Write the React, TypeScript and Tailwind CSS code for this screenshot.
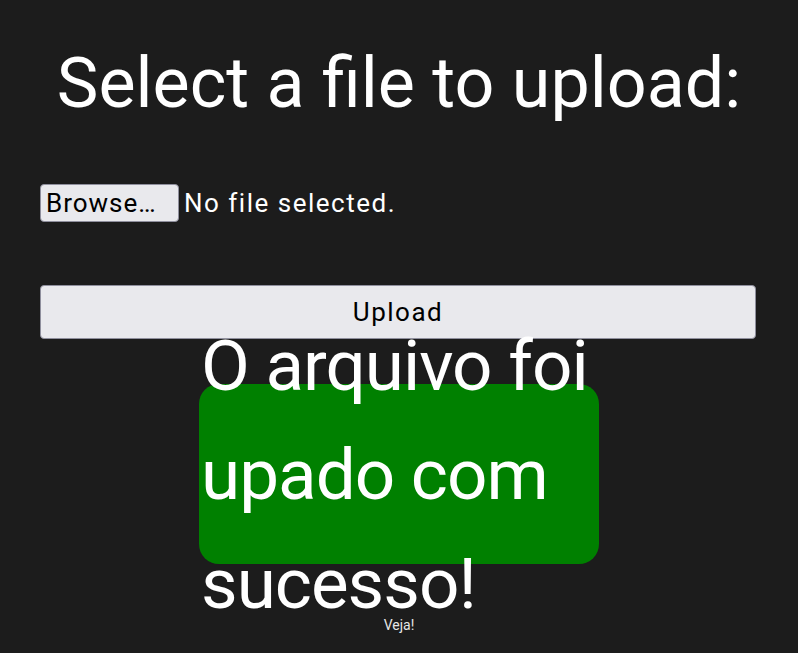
import React from 'react'

const App = () => {
  return (
    <div
      className="min-h-[653px] w-full bg-[#1c1c1c] text-white overflow-hidden"
      style={{ fontFamily: 'Roboto, "Noto Sans", sans-serif' }}
    >
      <h1 className="pt-[38px] text-center text-[70px] leading-[90px]">
        Select a file to upload:
      </h1>
      <form className="px-[40px] pt-[56px]">
        <div className="flex items-center gap-[5px] h-[38px]">
          <button
            type="button"
            className="h-[38px] w-[139px] px-[5px] text-left bg-[#e9e9ed] text-black border border-[#8f8f9d] rounded-[4px] text-[26px] leading-none tracking-[1px]"
          >
            Browse…
          </button>
          <span className="text-[26px] tracking-[1.5px]">No file selected.</span>
        </div>
        <button
          type="submit"
          className="mt-[63px] w-[716px] h-[54px] bg-[#e9e9ed] text-black border border-[#8f8f9d] rounded-[4px] text-[26px] tracking-[1.5px]"
        >
          Upload
        </button>
      </form>
      <div className="mx-auto mt-[45px] w-[400px] h-[180px] rounded-[20px] bg-[#008000] flex items-center">
        <p className="text-[71px] leading-[109px] pl-[2px] tracking-[-1px]">O arquivo foi upado com sucesso!</p>
      </div>
      <p className="mt-[51px] text-center text-[14px] text-[#e6e6e6]">Veja!</p>
    </div>
  )
}

export default App
